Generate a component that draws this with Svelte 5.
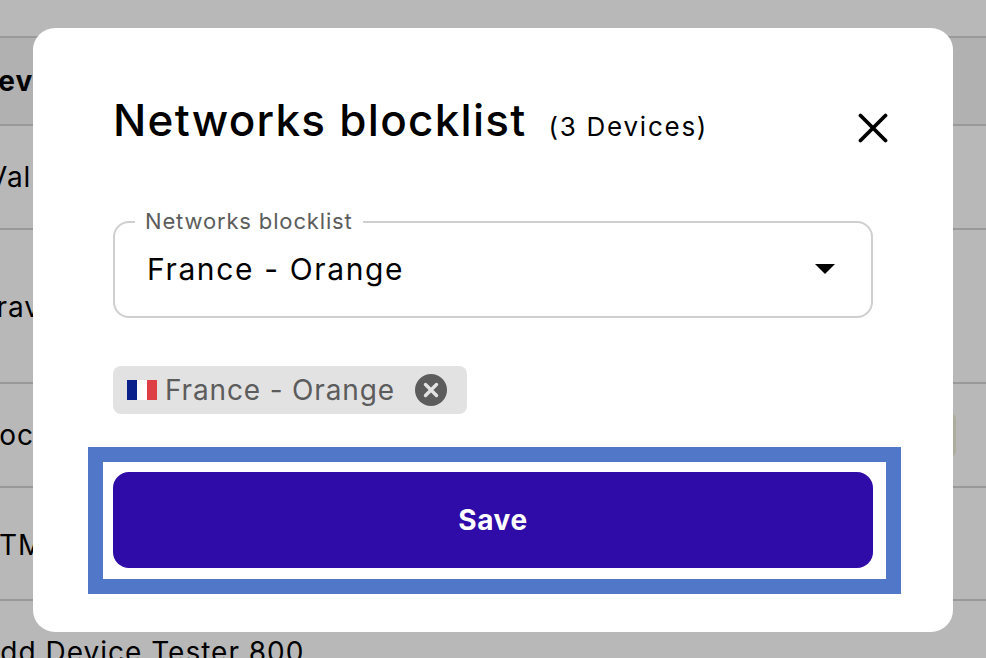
<script>
  const rows = [
    { label: 'Dev', cls: 'head', h: 88 },
    { label: 'Val', cls: 'r1', h: 104 },
    { label: 'Trav', cls: 'r2', h: 154 },
    { label: 'Doc', cls: 'r3', h: 104 },
    { label: 'ATM', cls: 'r4', h: 113 },
    { label: 'Add Device Tester 800', cls: 'r5', h: 70 }
  ];
</script>

<div class="page">
  <div class="table">
    {#each rows as row}
      <div class="row {row.cls}" style="height: {row.h}px">
        <span>{row.label}</span>
      </div>
    {/each}
  </div>
  <div class="peek"></div>
  <div class="overlay"></div>

  <div class="modal">
    <header class="head-line">
      <h2>Networks blocklist</h2>
      <span class="count">(3 Devices)</span>
      <button class="close" aria-label="Close">
        <svg width="30" height="30" viewBox="0 0 30 30"><path d="M2.5 2.5 L27.5 27.5 M27.5 2.5 L2.5 27.5" stroke="#000" stroke-width="3.8" stroke-linecap="round" fill="none"/></svg>
      </button>
    </header>

    <div class="field">
      <span class="legend">Networks blocklist</span>
      <span class="value">France - Orange</span>
      <svg class="caret" width="20" height="10" viewBox="0 0 20 10"><path d="M0 0 H20 L10 10 Z" fill="#000"/></svg>
    </div>

    <div class="chips">
      <div class="chip">
        <span class="flag"><i class="blue"></i><i class="white"></i><i class="red"></i></span>
        <span class="chip-text">France - Orange</span>
        <svg class="chip-x" width="32" height="32" viewBox="0 0 32 32"><circle cx="16" cy="16" r="16" fill="#5c5c5c"/><path d="M10.5 10.5 L21.5 21.5 M21.5 10.5 L10.5 21.5" stroke="#e2e2e2" stroke-width="3.4" stroke-linecap="round"/></svg>
      </div>
    </div>

    <div class="focus-ring">
      <button class="save">Save</button>
    </div>
  </div>
</div>

<style>
  :global(body) {
    margin: 0;
    background: #fff;
    overflow: hidden;
  }
  .page {
    position: relative;
    width: 986px;
    height: 658px;
    overflow: hidden;
    font-family: Inter, "Noto Sans", sans-serif;
    background: #fff;
  }
  .table {
    padding-top: 36px;
  }
  .row {
    box-sizing: border-box;
    border-top: 2px solid #d4d4d4;
    display: flex;
    align-items: center;
    font-size: 28px;
    letter-spacing: 1px;
    color: #000;
    white-space: nowrap;
  }
  .row span {
    margin-left: -23px;
  }
  .head {
    background: #f5f5f5;
    font-weight: 700;
  }
  .r1 span { margin-left: -12px; }
  .r2 { align-items: flex-end; padding-bottom: 58px; }
  .r2 span { margin-left: -21px; }
  .r3 span { margin-left: -22px; }
  .r4 { padding-top: 2px; }
  .r4 span { margin-left: -19px; }
  .r5 { align-items: flex-end; }
  .r5 span { margin-left: -20px; }
  .peek {
    position: absolute;
    left: 940px;
    top: 413px;
    width: 16px;
    height: 44px;
    border-radius: 6px;
    background: #f0f0dc;
  }
  .overlay {
    position: absolute;
    inset: 0;
    background: rgba(0, 0, 0, 0.28);
  }
  .modal {
    position: absolute;
    left: 33px;
    top: 28px;
    width: 920px;
    height: 604px;
    box-sizing: border-box;
    padding: 0 80px;
    background: #fff;
    border-radius: 22px;
  }
  .head-line {
    display: flex;
    align-items: baseline;
    height: 193px;
    box-sizing: border-box;
    padding-top: 64px;
    position: relative;
  }
  h2 {
    margin: 0;
    font-size: 44px;
    line-height: 56px;
    font-weight: 500;
    letter-spacing: 1.27px;
    color: #000;
  }
  .count {
    margin-left: 22px;
    font-size: 26px;
    letter-spacing: 1.75px;
    color: #000;
  }
  .close {
    position: absolute;
    right: -15px;
    top: 85px;
    width: 30px;
    height: 30px;
    padding: 0;
    border: 0;
    background: none;
    display: block;
  }
  .close svg { display: block; }
  .field {
    position: relative;
    box-sizing: border-box;
    height: 97px;
    border: 2px solid #cfcfcf;
    border-radius: 16px;
    display: flex;
    align-items: center;
    justify-content: space-between;
    padding: 0 36px 0 32px;
  }
  .field .value { margin-top: -2px; }
  .legend {
    position: absolute;
    left: 20px;
    top: -15px;
    padding: 0 10px;
    background: #fff;
    font-size: 22px;
    line-height: 26px;
    letter-spacing: 0.85px;
    color: #5c5c5c;
  }
  .value {
    font-size: 30px;
    letter-spacing: 1.63px;
    color: #000;
  }
  .caret { display: block; margin-top: -1px; }
  .chips {
    display: flex;
    margin-top: 48px;
  }
  .chip {
    display: flex;
    align-items: center;
    box-sizing: border-box;
    width: 354px;
    height: 48px;
    padding: 0 20px 0 14px;
    background: #e2e2e2;
    border-radius: 8px;
  }
  .flag {
    display: flex;
    width: 30px;
    height: 20px;
  }
  .flag i { flex: 1; }
  .blue { background: #0a218c; }
  .white { background: #fff; }
  .red { background: #de3f44; }
  .chip-text {
    margin-left: 8px;
    font-size: 28px;
    letter-spacing: 0.85px;
    color: #5c5c5c;
    white-space: nowrap;
  }
  .chip-x { margin-left: auto; display: block; }
  .focus-ring {
    box-sizing: border-box;
    margin: 33px -28px 0 -25px;
    padding: 10px 13px 11px 10px;
    border: 15px solid #5178c8;
    background: #fff;
  }
  .save {
    display: block;
    width: 100%;
    height: 96px;
    border: 0;
    border-radius: 16px;
    background: #2f0ba8;
    color: #fff;
    font-family: inherit;
    font-size: 28px;
    font-weight: 700;
    letter-spacing: 0.55px;
  }
</style>
